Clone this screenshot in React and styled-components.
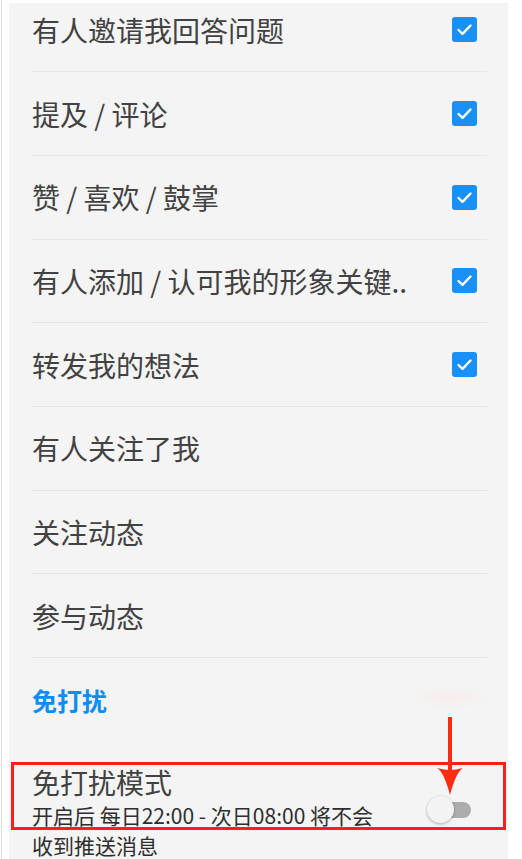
import React from 'react'
import styled, { createGlobalStyle } from 'styled-components'

const GlobalStyle = createGlobalStyle`
  html, body {
    margin: 0;
    padding: 0;
    background: #ffffff;
  }
  body {
    font-family: "Noto Sans CJK SC", "Noto Sans", "Liberation Sans", sans-serif;
    overflow: hidden;
  }
`

const items = [
    { label: '有人邀请我回答问题', checked: true },
    { label: '提及 / 评论', checked: true },
    { label: '赞 / 喜欢 / 鼓掌', checked: true },
    { label: '有人添加 / 认可我的形象关键..', checked: true },
    { label: '转发我的想法', checked: true },
    { label: '有人关注了我', checked: false },
    { label: '关注动态', checked: false },
    { label: '参与动态', checked: false },
]

function Check() {
    return (
        <CheckBox>
            <svg width="25" height="25" viewBox="0 0 25 25">
                <polyline points="6.5,13 10.5,16.8 18.5,8.5" fill="none" stroke="#ffffff" strokeWidth="2.4" strokeLinecap="round" strokeLinejoin="round" />
            </svg>
        </CheckBox>
    )
}

function App() {
    return (
        <Frame>
            <GlobalStyle />
            <Panel>
                <List>
                    {items.map(item => (
                        <Row key={item.label}>
                            <Label>{item.label}</Label>
                            {item.checked && <Check />}
                        </Row>
                    ))}
                </List>

                <SectionHeader>免打扰</SectionHeader>

                <ModeRow>
                    <ModeText>
                        <ModeTitle>免打扰模式</ModeTitle>
                        <ModeDesc>开启后 每日22:00 - 次日08:00 将不会收到推送消息</ModeDesc>
                    </ModeText>
                    <Toggle>
                        <Knob />
                    </Toggle>
                    <Highlight />
                </ModeRow>

                <Glow />
                <Arrow width="40" height="82" viewBox="0 0 40 82">
                    <rect x="18" y="0" width="4" height="55" fill="#ff2a12" />
                    <path d="M7 51 Q14 55 20 78 Q26 55 33 51 Q26 53 20 53 Q14 53 7 51 Z" fill="#ff2a12" />
                </Arrow>
            </Panel>
        </Frame>
    )
}

export default App

const Frame = styled.div`
    height: 859px;
    box-sizing: border-box;
    margin-left: 1px;
    border-left: 1px solid #dcdcdc;
    padding: 3px 0 0 7px;
    width: 508px;
`

const Panel = styled.div`
    position: relative;
    width: 499px;
    height: 856px;
    background: #f4f4f4;
    overflow: hidden;
    padding-left: 23px;
    box-sizing: border-box;
`

const List = styled.div`
    margin-top: -14.5px;
    width: 455px;
`

const Row = styled.div`
    height: 83.7px;
    box-sizing: border-box;
    border-bottom: 1px solid #e6e6e6;
    display: flex;
    align-items: center;
    justify-content: space-between;
    padding-right: 10px;
`

const Label = styled.span`
    font-size: 28px;
    line-height: 34px;
    color: #424242;
    white-space: nowrap;
`

const CheckBox = styled.div`
    width: 25px;
    height: 25px;
    border-radius: 3px;
    background: #1890f5;
    display: flex;
    align-items: center;
    justify-content: center;
`

const SectionHeader = styled.div`
    height: 102px;
    box-sizing: border-box;
    padding-top: 25px;
    font-size: 25px;
    line-height: 34px;
    font-weight: 700;
    color: #0f8df0;
`

const ModeRow = styled.div`
    position: relative;
    display: flex;
    align-items: flex-start;
    gap: 40px;
`

const ModeText = styled.div`
    width: 355px;
    padding-top: 4px;
`

const ModeTitle = styled.div`
    font-size: 28px;
    line-height: 36px;
    color: #424242;
`

const ModeDesc = styled.div`
    font-size: 21px;
    line-height: 30px;
    color: #2e2e2e;
`

const Toggle = styled.div`
    position: relative;
    margin-top: 42px;
    width: 44px;
    height: 16px;
    padding-left: 13px;
    box-sizing: border-box;
    &::before {
        content: "";
        display: block;
        width: 31px;
        height: 16px;
        border-radius: 8px;
        background: #adadad;
    }
`

const Knob = styled.div`
    position: absolute;
    left: 0;
    top: -6px;
    width: 27px;
    height: 27px;
    border-radius: 50%;
    background: #f3f3f3;
    box-shadow: 0 1px 3px rgba(0, 0, 0, 0.3);
`

const Highlight = styled.div`
    position: absolute;
    left: -21px;
    top: 2px;
    width: 495px;
    height: 68px;
    box-sizing: border-box;
    border: 3px solid #ff1e1e;
    pointer-events: none;
`

const Glow = styled.div`
    position: absolute;
    left: 398px;
    top: 682px;
    width: 84px;
    height: 24px;
    border-radius: 50%;
    background: radial-gradient(ellipse at center, rgba(255, 210, 195, 0.22), rgba(255, 230, 220, 0) 70%);
`

const Arrow = styled.svg`
    position: absolute;
    left: 421px;
    top: 714px;
`
